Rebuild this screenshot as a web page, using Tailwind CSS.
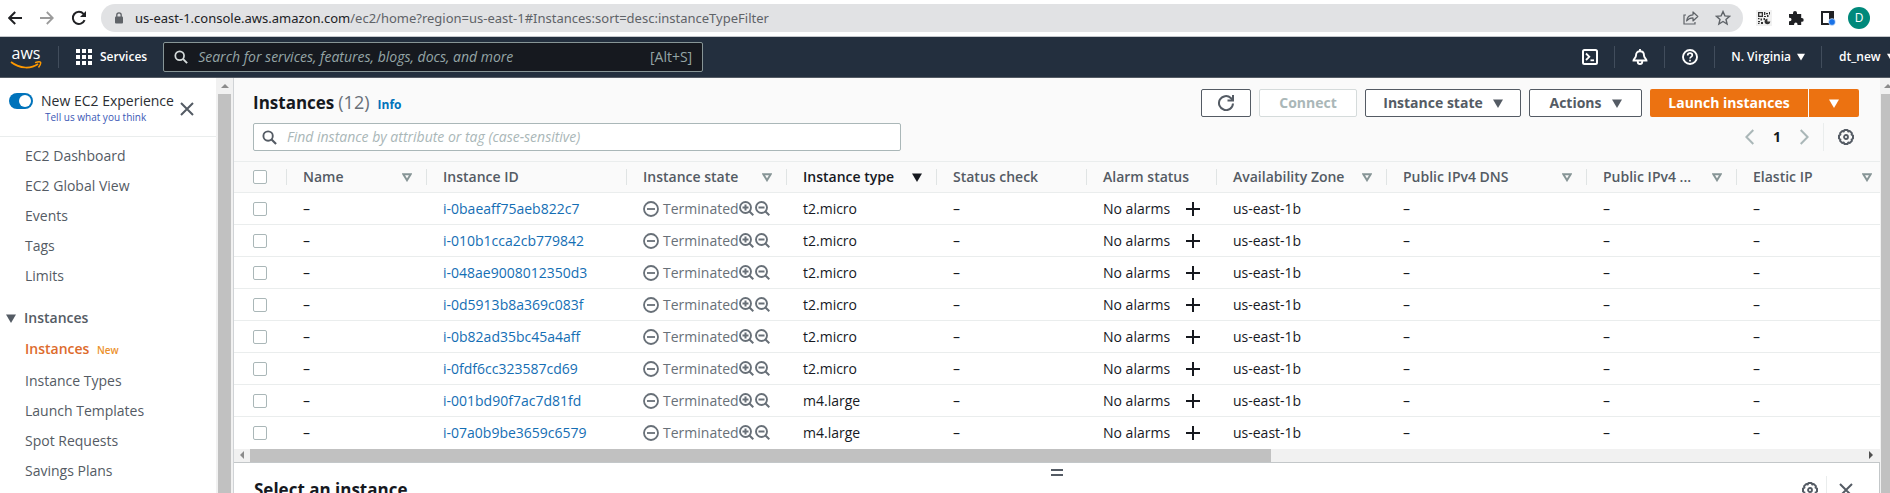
<!DOCTYPE html>
<html lang="en">
<head>
<meta charset="utf-8">
<meta name="viewport" content="width=device-width, initial-scale=1">
<title>Instances | EC2</title>
<script src="https://cdn.jsdelivr.net/npm/@tailwindcss/browser@4"></script>
</head>
<body class="flex h-screen flex-col overflow-hidden bg-white font-['Open_Sans','Noto_Sans',sans-serif] text-sm leading-5 text-[#16191f]">

<svg class="hidden" aria-hidden="true">
  <symbol id="search" viewBox="0 0 16 16"><circle cx="6.5" cy="6.5" r="5" fill="none" stroke="currentColor" stroke-width="2"/><path d="M10.2 10.2 15 15" stroke="currentColor" stroke-width="2.2"/></symbol>
  <symbol id="caret" viewBox="0 0 10 9"><path d="M0 .5h10L5 9z" fill="currentColor"/></symbol>
  <symbol id="filter" viewBox="0 0 10 9"><path d="M1.3 1.3h7.4L5 7.3z" fill="none" stroke="currentColor" stroke-width="1.9"/></symbol>
  <symbol id="close" viewBox="0 0 14 14"><path d="m1 1 12 12M13 1 1 13" fill="none" stroke="currentColor" stroke-width="2"/></symbol>
  <symbol id="gear" viewBox="0 0 16 16"><path d="M6.500 1h3l.8 1.400 1.600-.3 2 2-.3 1.600 1.400.8v3l-1.400.8.3 1.600-2 2-1.600-.3-.8 1.400h-3l-.8-1.400-1.600.3-2-2 .3-1.600L1 9.500v-3l1.400-.8-.3-1.600 2-2 1.600.3z" fill="none" stroke="currentColor" stroke-width="2" stroke-linejoin="round"/><circle cx="8" cy="8" r="2" fill="none" stroke="currentColor" stroke-width="1.800"/></symbol>
  <symbol id="minus-circle" viewBox="0 0 16 16"><circle cx="8" cy="8" r="7" fill="none" stroke="currentColor" stroke-width="1.8"/><path d="M4 8h8" stroke="currentColor" stroke-width="1.8"/></symbol>
  <symbol id="zoom-in" viewBox="0 0 15 15"><circle cx="6.5" cy="6.5" r="5.5" fill="none" stroke="currentColor" stroke-width="1.900"/><path d="M10.5 10.5 14.300 14.300M3.500 6.500h6M6.500 3.500v6" stroke="currentColor" stroke-width="2"/></symbol>
  <symbol id="zoom-out" viewBox="0 0 15 15"><circle cx="6.5" cy="6.5" r="5.5" fill="none" stroke="currentColor" stroke-width="1.900"/><path d="M10.5 10.5 14.300 14.300M3.500 6.500h6" stroke="currentColor" stroke-width="2"/></symbol>
  <symbol id="plus" viewBox="0 0 14 14"><path d="M7 0v14M0 7h14" stroke="currentColor" stroke-width="2"/></symbol>
</svg>

<!-- Browser toolbar -->
<div class="flex h-9 flex-none items-center pl-2 pr-5">
  <button aria-label="Back" class="mr-[18px] text-[#202124]"><svg class="block size-3.5" viewBox="0 0 14 14" fill="none" stroke="currentColor" stroke-width="2"><path d="M14 7H1.5M7.2 1 1.2 7l6 6"/></svg></button>
  <button aria-label="Forward" class="mr-[17px] text-[#9b9b9b]"><svg class="block size-3.5" viewBox="0 0 14 14" fill="none" stroke="currentColor" stroke-width="1.8"><path d="M0 7h12.500M6.800 1l6 6-6 6"/></svg></button>
  <button aria-label="Reload" class="mr-3.5 text-[#202124]"><svg class="block size-4" viewBox="0 0 16 16"><path d="M13.6 10.2A6.1 6.1 0 1 1 12.5 3.8L14 5.4" fill="none" stroke="currentColor" stroke-width="2"/><path d="M15 1v6H9z" fill="currentColor"/></svg></button>
  <div class="flex h-7 flex-1 items-center rounded-full bg-[#e1e2e4] pl-3.5 pr-3">
    <svg class="mr-3 h-3 w-2 flex-none text-[#5f6368]" viewBox="0 0 8 12"><rect y="4.5" width="8" height="7" rx="1" fill="currentColor"/><path d="M1.8 5V3a2.2 2.2 0 0 1 4.4 0v2" fill="none" stroke="currentColor" stroke-width="1.3"/></svg>
    <p class="flex-1 whitespace-nowrap font-['Noto_Sans',sans-serif] text-[13px] text-[#5f6368]"><span class="text-[#202124]">us-east-1.console.aws.amazon.com</span>/ec2/home?region=us-east-1#Instances:sort=desc:instanceTypeFilter</p>
    <button aria-label="Share" class="mr-4 text-[#5f6368]"><svg class="block size-4" viewBox="0 0 16 16" fill="none" stroke="currentColor" stroke-width="1.2"><path d="M3 5H1v9h11v-2"/><path d="M10 2v2.800C6 5 4 7.500 3.600 11 5.300 8.700 7.200 7.900 10 7.900V11l4.800-4.500z" stroke-linejoin="round"/></svg></button>
    <button aria-label="Bookmark" class="text-[#5f6368]"><svg class="block size-4" viewBox="0 0 16 16" fill="none" stroke="currentColor" stroke-width="1.4"><path d="m8 1.600 1.900 4.300 4.700.4-3.600 3.100 1.100 4.600L8 11.500 3.900 14 5 9.400 1.400 6.300l4.700-.4z"/></svg></button>
  </div>
  <div class="ml-[13px] flex items-center gap-4">
    <button aria-label="QR code"><svg class="block size-4" viewBox="0 0 16 16"><path d="M0 0h16v16H0z" fill="#f1f1f1"/><g fill="#333"><path d="M2 2h5v5H2zm1.300 1.300v2.400h2.400V3.300z" fill-rule="evenodd"/><path d="M8 2h1.300v3H8zM10 3h2v1.300h-2zM11 5h1.500v2H11zM13 2h1v2.500h-1zM8 6h2v1H8zM2 8h1.500v1.300H2zM4.500 8.500H6v2H4.500zM2 11h2v1.200H2zM5 12h2v2H5zM2 13h1.500v1H2zM7.500 8H9v2H7.500z"/><circle cx="11.400" cy="11.500" r="2.800"/></g><path d="M11.400 11.500V8.300h3.200v3.200z" fill="#f1f1f1"/></svg></button>
    <button aria-label="Extensions"><svg class="block size-4" viewBox="0 0 16 16"><path d="M1 4h4V3a2 2 0 0 1 4 0v1h4.200v4h.6a1.900 1.900 0 0 1 0 3.800h-.6V15H9.500v-.8a1.700 1.700 0 0 0-3.400 0v.8H1v-3.800h.8a1.700 1.700 0 0 0 0-3.400H1z" fill="#202124"/></svg></button>
    <button aria-label="Side panel"><svg class="block size-4" viewBox="0 0 16 16"><path d="M2 2h11v12H2z" fill="none" stroke="#202124" stroke-width="2"/><path d="M9 1h5v9H9z" fill="#202124"/><circle cx="12" cy="12" r="3.400" fill="#1a73e8" stroke="#fff" stroke-width=".6"/></svg></button>
    <button aria-label="Profile" class="-ml-1 size-[22px] rounded-full bg-[#00897b] text-center text-xs leading-[22px] text-white">D</button>
  </div>
</div>

<!-- Console navigation -->
<header class="flex h-[42px] flex-none items-center border-y border-t-[#c5c8cc] border-b-[#545b64] bg-[#232f3e] pl-2.5 text-xs text-white">
  <a href="#" aria-label="AWS home" class="mr-4 flex w-8 flex-col items-center"><span class="text-base font-medium leading-4">aws</span><svg class="h-2 w-8" viewBox="0 0 32 8"><path d="M1 1c9 7 20 7 27 2" fill="none" stroke="#f90" stroke-width="1.700"/><path d="M25 1.600c3-1 5-1 5.500-.4S30 4.500 28.500 6.500" fill="none" stroke="#f90" stroke-width="1.400"/></svg></a>
  <span class="mr-[17px] h-[22px] w-px flex-none bg-[#414d5c]"></span>
  <button class="flex items-center gap-2 font-semibold"><svg class="size-4" viewBox="0 0 16 16" fill="#fff"><path d="M0 0h4v4H0zM6 0h4v4H6zM12 0h4v4h-4zM0 6h4v4H0zM6 6h4v4H6zM12 6h4v4h-4zM0 12h4v4H0zM6 12h4v4H6zM12 12h4v4h-4z"/></svg>Services</button>
  <div class="ml-4 flex h-[30px] w-[540px] items-center rounded-xs border border-[#879596] bg-[#16191f] px-2.5 text-sm text-[#95a5a6]">
    <svg class="mr-2.5 size-3.5 text-[#d5dbdb]"><use href="#search"/></svg>
    <input type="search" aria-label="Search" placeholder="Search for services, features, blogs, docs, and more" class="min-w-0 flex-1 bg-transparent outline-none placeholder:italic placeholder:text-[#95a5a6]">
    <span>[Alt+S]</span>
  </div>
  <div class="ml-auto flex items-center">
    <button aria-label="CloudShell"><svg class="block size-4" viewBox="0 0 16 16" fill="none" stroke="#fff" stroke-width="2"><rect x="1" y="1" width="14" height="14" rx="1.500"/><path d="m4 4.500 3.300 3.300L4 11" stroke-width="1.800"/><path d="M8.500 11.300H12" stroke-width="1.800"/></svg></button>
    <span class="ml-4 mr-[17px] h-[22px] w-px bg-[#414d5c]"></span>
    <button aria-label="Notifications"><svg class="block size-4" viewBox="0 0 16 16" fill="none" stroke="#fff" stroke-width="1.900"><path d="M8 2.300c-2.500 0-4 1.700-4 4.200C4 9 1.500 9.500 1.500 11.500h13C14.500 9.500 12 9 12 6.500c0-2.500-1.500-4.200-4-4.200zM8 0v2M5.800 12v1c0 1 .9 2 2.200 2s2.200-1 2.200-2v-1"/></svg></button>
    <span class="ml-4 mr-[17px] h-[22px] w-px bg-[#414d5c]"></span>
    <button aria-label="Help"><svg class="block size-4" viewBox="0 0 16 16" fill="none" stroke="#fff" stroke-width="1.900"><circle cx="8" cy="8" r="7"/><path d="M5.700 6.400c0-1.400 1-2.200 2.300-2.200s2.300.8 2.300 2c0 1.600-2.300 1.700-2.300 3.300M8 10.800v1.700" stroke-width="1.700"/></svg></button>
    <span class="mx-4 h-[22px] w-px bg-[#414d5c]"></span>
    <button class="flex items-center gap-1.5 font-semibold">N. Virginia<svg class="h-2 w-2"><use href="#caret"/></svg></button>
    <span class="ml-4 mr-[17px] h-[22px] w-px bg-[#414d5c]"></span>
    <button class="flex w-[51px] items-center gap-1.5 overflow-hidden font-semibold">dt_new<svg class="h-2 w-2 flex-none"><use href="#caret"/></svg></button>
  </div>
</header>

<div class="flex min-h-0 flex-1">
  <!-- Sidebar -->
  <nav class="w-[216px] flex-none overflow-hidden text-[#545b64]">
    <div class="flex h-[59px] items-start border-b border-[#eaeded] pl-[9px] pt-[13px]">
      <label for="experience" class="mr-2 mt-0.5 flex h-4 w-6 justify-end rounded-full bg-[#0073bb] p-0.5"><input id="experience" type="checkbox" checked aria-label="New EC2 Experience" class="size-3 appearance-none rounded-full bg-white"></label>
      <div class="flex flex-col whitespace-nowrap"><label for="experience" class="text-[#2a2e33]">New EC2 Experience</label><a href="#" class="pl-1 text-[10px] leading-3 text-[#3b57b5]">Tell us what you think</a></div>
      <button aria-label="Close" class="ml-auto mr-[22px] mt-[11px]"><svg class="block size-3.5"><use href="#close"/></svg></button>
    </div>
    <ul class="pl-[25px] pt-1">
      <li class="py-[5px]"><a href="#">EC2 Dashboard</a></li>
      <li class="py-[5px]"><a href="#">EC2 Global View</a></li>
      <li class="py-[5px]"><a href="#">Events</a></li>
      <li class="py-[5px]"><a href="#">Tags</a></li>
      <li class="py-[5px]"><a href="#">Limits</a></li>
    </ul>
    <button class="mt-[15px] flex items-center gap-2 py-0.5 pl-1.5 font-semibold"><svg class="h-[9px] w-2.5"><use href="#caret"/></svg>Instances</button>
    <ul class="pl-[25px] pt-1">
      <li class="pb-1.5 pt-[5px]"><a href="#" class="font-semibold text-[#dd6b2c]">Instances <span class="ml-1 text-[10px] text-[#ec912d]">New</span></a></li>
      <li class="py-[5px]"><a href="#">Instance Types</a></li>
      <li class="py-[5px]"><a href="#">Launch Templates</a></li>
      <li class="py-[5px]"><a href="#">Spot Requests</a></li>
      <li class="py-[5px]"><a href="#">Savings Plans</a></li>
    </ul>
  </nav>
  <div class="flex w-[18px] flex-none flex-col items-center border-r border-[#d0d3d6] bg-[#f1f1f1]">
    <svg class="my-1.5 h-1 w-2 flex-none" viewBox="0 0 8 4"><path d="M0 4h8L4 0z" fill="#8b8b8b"/></svg>
    <div class="w-[13px] flex-1 bg-[#c1c1c1]"></div>
  </div>

  <!-- Content -->
  <main class="flex min-w-0 flex-1 flex-col bg-[#fafafa]">
    <div class="flex flex-none items-center gap-2 pl-[19px] pr-[21px] pt-[11px]">
      <h1 class="mr-auto flex items-baseline pb-0.5 text-[17px] font-bold leading-6">Instances<span class="ml-1 text-lg leading-6 font-normal text-[#687078]">(12)</span><a href="#" class="ml-2 text-xs font-bold text-[#0073bb]">Info</a></h1>
      <button aria-label="Refresh" class="flex h-7 w-[50px] items-center justify-center rounded-xs border border-[#545b64] bg-white text-[#545b64]"><svg class="size-4" viewBox="0 0 16 16" fill="none" stroke="currentColor" stroke-width="2"><path d="M15 8.500A7 7 0 1 1 12.800 3L15 5.200"/><path d="M15 0v5.500H9.500"/></svg></button>
      <button disabled class="h-7 w-[98px] rounded-xs border border-[#d5dbdb] bg-white font-bold text-[#aab7b8]">Connect</button>
      <button class="flex h-7 w-[156px] items-center justify-center gap-2.5 rounded-xs border border-[#545b64] bg-white font-bold text-[#545b64]">Instance state<svg class="h-[9px] w-2.5"><use href="#caret"/></svg></button>
      <button class="flex h-7 w-[113px] items-center justify-center gap-2.5 rounded-xs border border-[#545b64] bg-white font-bold text-[#545b64]">Actions<svg class="h-[9px] w-2.5"><use href="#caret"/></svg></button>
      <div class="flex gap-px font-bold text-white">
        <button class="h-7 w-[158px] rounded-l-xs bg-[#ec7211]">Launch instances</button>
        <button aria-label="More launch options" class="flex h-7 w-[50px] items-center justify-center rounded-r-xs bg-[#ec7211]"><svg class="h-[9px] w-2.5"><use href="#caret"/></svg></button>
      </div>
    </div>
    <div class="flex flex-none items-center pb-2.5 pl-[19px] pr-[26px] pt-1.5">
      <div class="flex h-7 w-[648px] items-center rounded-xs border border-[#aab7b8] bg-white px-2">
        <svg class="mr-2.5 size-[15px] text-[#545b64]"><use href="#search"/></svg>
        <input type="search" aria-label="Find instance" placeholder="Find instance by attribute or tag (case-sensitive)" class="min-w-0 flex-1 bg-transparent outline-none placeholder:italic placeholder:text-[#aab7b8]">
      </div>
      <div class="ml-auto flex items-center">
        <button aria-label="Previous page" class="text-[#aab7b8]"><svg class="block h-4 w-[9px]" viewBox="0 0 9 16" fill="none" stroke="currentColor" stroke-width="2"><path d="M8.300 1 1.400 8l6.900 7"/></svg></button>
        <span class="w-[46px] text-center font-bold">1</span>
        <button aria-label="Next page" class="text-[#aab7b8]"><svg class="block h-4 w-[9px]" viewBox="0 0 9 16" fill="none" stroke="currentColor" stroke-width="2"><path d="m.7 1 6.900 7-6.900 7"/></svg></button>
        <span class="mx-3.5 h-7 w-px bg-[#eaeded]"></span>
        <button aria-label="Preferences" class="text-[#545b64]"><svg class="block size-4"><use href="#gear"/></svg></button>
      </div>
    </div>

    <div class="flex-none overflow-hidden">
      <table class="w-[1652px] table-fixed border-collapse text-left">
        <colgroup><col class="w-[52px]"><col class="w-[140px]"><col class="w-[200px]"><col class="w-[160px]"><col class="w-[150px]"><col class="w-[150px]"><col class="w-[130px]"><col class="w-[170px]"><col class="w-[200px]"><col class="w-[150px]"><col class="w-[150px]"></colgroup>
        <thead class="text-[#545b64]"><tr id="head" class="h-[31px] border-y border-[#eaeded]"></tr></thead>
        <tbody id="rows" class="bg-white"></tbody>
      </table>
    </div>
    <div class="flex h-[13px] flex-none items-center bg-[#f1f1f1] pl-1.5 pr-[7px]">
      <svg class="mr-1.5 h-2 w-1 flex-none" viewBox="0 0 4 8"><path d="M4 0v8L0 4z" fill="#8b8b8b"/></svg>
      <div class="h-[13px] w-5/8 bg-[#c1c1c1]"></div>
      <svg class="ml-auto h-2 w-1 flex-none" viewBox="0 0 4 8"><path d="M0 0v8l4-4z" fill="#505050"/></svg>
    </div>

    <!-- Split panel -->
    <section class="min-h-0 flex-1 overflow-hidden border-r border-t border-[#c3c7c9] bg-white">
      <div class="flex justify-center pt-1.5"><button aria-label="Resize panel" class="h-[7px] w-3 border-y-2 border-[#545b64]"></button></div>
      <div class="flex items-center pl-5 pr-[26px] text-[#545b64]">
        <h2 class="mr-auto text-[17px] font-bold leading-7 text-[#16191f]">Select an instance</h2>
        <button aria-label="Panel preferences"><svg class="block size-4"><use href="#gear"/></svg></button>
        <span class="ml-2 mr-3 h-7 w-px bg-[#eaeded]"></span>
        <button aria-label="Close panel"><svg class="block size-3.5"><use href="#close"/></svg></button>
      </div>
    </section>
  </main>
  <div class="flex w-2.5 flex-none flex-col items-end overflow-hidden bg-[#f1f1f1]">
    <svg class="my-1.5 h-1 w-1.5 flex-none" viewBox="0 0 6 4"><path d="M0 4h8L4 0z" fill="#8b8b8b"/></svg>
    <div class="w-[9px] flex-1 bg-[#c1c1c1]"></div>
  </div>
</div>

<script>
const columns = [["Name",1],["Instance ID",0],["Instance state",1],["Instance type",2],["Status check",0],["Alarm status",0],["Availability Zone",1],["Public IPv4 DNS",1],["Public IPv4 ...",1],["Elastic IP",1]];
const instances = [["i-0baeaff75aeb822c7","t2.micro"],["i-010b1cca2cb779842","t2.micro"],["i-048ae9008012350d3","t2.micro"],["i-0d5913b8a369c083f","t2.micro"],["i-0b82ad35bc45a4aff","t2.micro"],["i-0fdf6cc323587cd69","t2.micro"],["i-001bd90f7ac7d81fd","m4.large"],["i-07a0b9be3659c6579","m4.large"]];
const check = label => `<input type="checkbox" aria-label="${label}" class="block size-3.5 appearance-none rounded-xs border border-[#aab7b8] bg-white">`;
const marks = ["", '<svg class="h-[9px] w-2.5 flex-none text-[#879596]"><use href="#filter"/></svg>', '<svg class="h-[9px] w-2.5 flex-none"><use href="#caret"/></svg>'];
document.getElementById("head").innerHTML = `<th class="pl-[19px]">${check("Select all")}</th>` + columns.map(([name, mark]) =>
  `<th class="font-semibold ${mark === 2 ? "text-[#16191f]" : ""}"><div class="flex h-4 items-center justify-between whitespace-nowrap border-l border-[#e0e4e4] pl-4 pr-3.5">${name}${marks[mark]}</div></th>`).join("");
document.getElementById("rows").innerHTML = instances.map(([id, type], i) =>
  `<tr class="h-8 ${i < 7 ? "border-b border-[#eaeded]" : ""}"><td class="pl-[19px]">${check("Select " + id)}</td>
  <td class="pl-[17px]">–</td>
  <td class="pl-[17px]"><a href="#" class="text-[#146eb4]">${id}</a></td>
  <td class="pl-[17px]"><div class="flex items-center text-[#687078]"><svg class="mr-1 size-4"><use href="#minus-circle"/></svg><span class="w-[76px]">Terminated</span><button aria-label="Filter for value" class="mr-px"><svg class="block size-[15px]"><use href="#zoom-in"/></svg></button><button aria-label="Filter out value"><svg class="block size-[15px]"><use href="#zoom-out"/></svg></button></div></td>
  <td class="pl-[17px]">${type}</td>
  <td class="pl-[17px]">–</td>
  <td class="pl-[17px]"><div class="flex items-center justify-between pr-4">No alarms<button aria-label="Add alarm"><svg class="block size-3.5"><use href="#plus"/></svg></button></div></td>
  <td class="pl-[17px]">us-east-1b</td>
  <td class="pl-[17px]">–</td><td class="pl-[17px]">–</td><td class="pl-[17px]">–</td></tr>`).join("");
</script>
</body>
</html>
